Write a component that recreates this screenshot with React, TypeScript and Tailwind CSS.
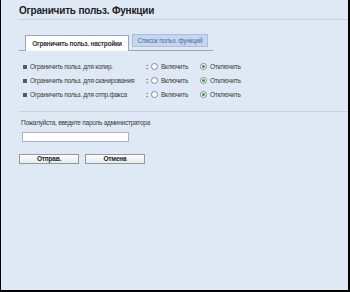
import React from 'react'

const rows = [
  'Ограничить польз. для копир.',
  'Ограничить польз. для сканирования',
  'Ограничить польз. для отпр.факса',
]

function Radio({ checked, label }: { checked?: boolean; label: string }) {
  return (
    <span className="flex items-center gap-[3px]">
      <span className="flex h-[7px] w-[7px] items-center justify-center rounded-full border border-[#7c8a99] bg-white">
        {checked ? <span className="h-[3px] w-[3px] rounded-full bg-[#2f9a3a]" /> : null}
      </span>
      <span>{label}</span>
    </span>
  )
}

export default function App() {
  return (
    <div className="h-[292px] w-[350px] whitespace-nowrap border-b-2 border-l border-r-2 border-black bg-[#dfe9f5] font-['Liberation_Sans',Arial,sans-serif] text-[#333]">
      <div className="pl-[18px]">
        <h1 className="pt-[5px] text-[10px] font-bold leading-[12px] tracking-[-0.2px] text-[#222]">
          Ограничить польз. Функции
        </h1>
        <div className="mt-[2px] border-b border-[#c3d2e3]" />

        <div className="mt-[14px] flex w-[194px] items-end gap-[3px] border-b border-[#9aa7b4] pl-[6px] text-[6.5px] tracking-[-0.25px]">
          <div className="-mb-px flex h-[16px] w-[104px] items-center justify-center border border-b-0 border-[#9aa7b4] bg-white font-bold text-[#333]">
            Ограничить польз. настройки
          </div>
          <div className="mb-[3px] flex h-[13px] w-[76px] items-center justify-center border border-[#a9bfd9] bg-[#c5d7ee] text-[#4a6fa5]">
            Список польз. функций
          </div>
        </div>

        <div className="mt-[11px] flex flex-col gap-[5px] pl-[4px] text-[6.5px] leading-[9px] tracking-[-0.25px] text-[#3a3a3a]">
          {rows.map((r) => (
            <div key={r} className="flex items-center">
              <span className="mr-[3px] h-[4px] w-[4px] bg-[#4b5b6c]" />
              <span className="w-[116px]">{r}</span>
              <span className="mr-[3px] font-bold">:</span>
              <span className="w-[49px]">
                <Radio label="Включить" />
              </span>
              <Radio checked label="Отключить" />
            </div>
          ))}
        </div>

        <div className="mt-[12px] border-b border-[#c3d2e3]" />

        <div className="mt-[6px] pl-[2px] text-[6.5px] leading-[9px] tracking-[-0.25px] text-[#3a3a3a]">
          Пожалуйста, введите пароль администратора
        </div>
        <div className="ml-[3px] mt-[5px] h-[10px] w-[107px] border border-[#a9b5c2] bg-white" />

        <div className="mt-[12px] flex gap-[6px]">
          <button className="flex h-[10px] w-[60px] items-center justify-center border border-[#8e9aa6] bg-gradient-to-b from-white to-[#e7e9ec] text-[6.5px] font-bold leading-none tracking-[-0.2px] text-[#222]">
            Отправ.
          </button>
          <button className="flex h-[10px] w-[60px] items-center justify-center border border-[#8e9aa6] bg-gradient-to-b from-white to-[#e7e9ec] text-[6.5px] font-bold leading-none tracking-[-0.2px] text-[#222]">
            Отмена
          </button>
        </div>
      </div>
    </div>
  )
}
